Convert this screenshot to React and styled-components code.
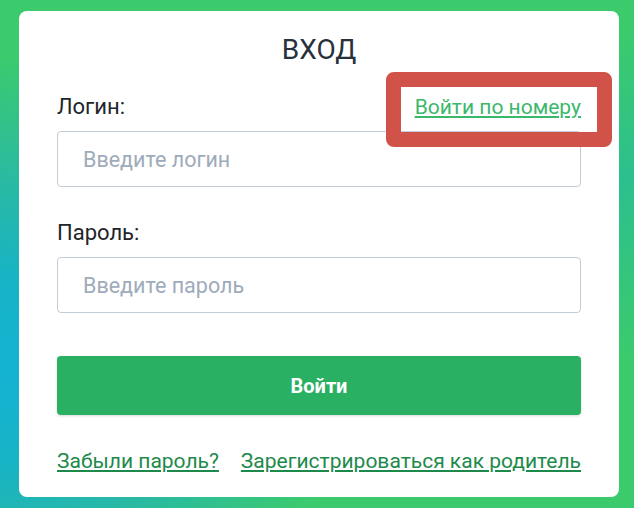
import React from "react";
import styled, { createGlobalStyle } from "styled-components";

const Global = createGlobalStyle`
  * { box-sizing: border-box; }
  html, body { margin: 0; padding: 0; }
  body {
    width: 634px;
    height: 508px;
    overflow: hidden;
    font-family: Roboto, "Noto Sans", sans-serif;
  }
`;

const Page = styled.div`
  width: 634px;
  height: 508px;
  padding: 11px 15px 11px 19px;
  background:
    radial-gradient(ellipse 380px 320px at -30px 370px, #12b2d4 0%, #17b3c6 30%, rgba(40,184,168,0.9) 60%, rgba(60,203,108,0) 100%),
    linear-gradient(160deg, #3ccb6c 0%, #3ccb6c 35%, #2bbf8e 55%, #3ccb6c 80%);
  background-color: #3ccb6c;
`;

const Card = styled.div`
  position: relative;
  width: 600px;
  height: 486px;
  background: #ffffff;
  border-radius: 8px;
  padding: 22px 38px 0 38px;
  display: flex;
  flex-direction: column;
`;

const Title = styled.h1`
  margin: 0;
  text-align: center;
  font-size: 28px;
  line-height: 34px;
  font-weight: 400;
  color: #29313b;
`;

const LabelRow = styled.div`
  display: flex;
  justify-content: space-between;
  align-items: center;
  height: 24px;
  margin-top: ${(p) => p.$top}px;
  margin-bottom: 12px;
`;

const Label = styled.label`
  font-size: 22px;
  line-height: 24px;
  color: #212529;
`;

const Link = styled.a`
  font-size: 21px;
  line-height: 24px;
  color: ${(p) => (p.$light ? "#3bb86b" : "#1d8a4b")};
  text-decoration: underline;
  text-underline-offset: 2px;
  cursor: pointer;
`;

const Input = styled.input`
  width: 100%;
  height: 56px;
  border: 1px solid #c3cdd9;
  border-radius: 4px;
  padding: 0 0 0 25px;
  font-family: inherit;
  font-size: 21.5px;
  color: #212529;
  outline: none;
  &::placeholder { color: #9eabbb; }
`;

const Button = styled.button`
  margin-top: 43px;
  width: 100%;
  height: 59px;
  border: none;
  border-radius: 4px;
  background: #29b062;
  color: #ffffff;
  font-family: inherit;
  font-size: 20px;
  font-weight: 700;
  box-shadow: 0 1px 3px rgba(0, 0, 0, 0.15);
  cursor: pointer;
`;

const Footer = styled.div`
  margin-top: 34px;
  display: flex;
  justify-content: space-between;
  align-items: center;
  height: 24px;
`;

const Highlight = styled.div`
  position: absolute;
  left: 367px;
  top: 61px;
  width: 226px;
  height: 75px;
  border: 15px solid #d15248;
  border-radius: 8px;
  pointer-events: none;
`;

export default function App() {
  return (
    <>
      <Global />
      <Page>
        <Card>
          <Title>ВХОД</Title>
          <LabelRow $top={28}>
            <Label>Логин:</Label>
            <Link $light>Войти по номеру</Link>
          </LabelRow>
          <Input placeholder="Введите логин" />
          <LabelRow $top={34}>
            <Label>Пароль:</Label>
          </LabelRow>
          <Input type="password" placeholder="Введите пароль" />
          <Button>Войти</Button>
          <Footer>
            <Link>Забыли пароль?</Link>
            <Link>Зарегистрироваться как родитель</Link>
          </Footer>
          <Highlight />
        </Card>
      </Page>
    </>
  );
}
